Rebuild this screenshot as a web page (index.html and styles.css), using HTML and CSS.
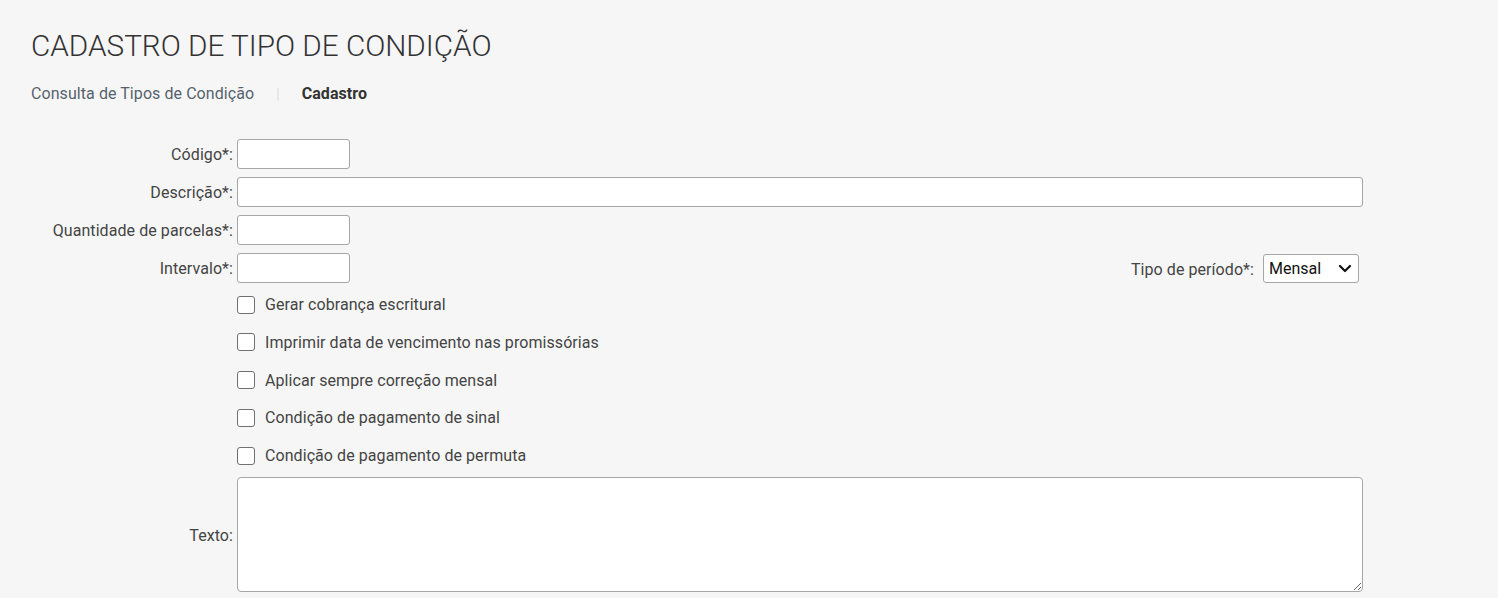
FILE: index.html
```html
<!DOCTYPE html>
<html lang="pt-BR">
<head>
<meta charset="utf-8">
<title>Cadastro de Tipo de Condição</title>
<link rel="stylesheet" href="styles.css">
</head>
<body>
<div class="page">
  <header class="page-header">
    <h1 class="title">CADASTRO DE TIPO DE CONDIÇÃO</h1>
    <nav class="crumbs">
      <a class="crumb-link" href="#">Consulta de Tipos de Condição</a>
      <span class="crumb-sep">|</span>
      <span class="crumb-current">Cadastro</span>
    </nav>
  </header>

  <form class="form">
    <label class="f-label">Código*:</label>
    <div class="f-field"><input class="inp inp-short" type="text"></div>

    <label class="f-label">Descrição*:</label>
    <div class="f-field"><input class="inp inp-full" type="text"></div>

    <label class="f-label">Quantidade de parcelas*:</label>
    <div class="f-field"><input class="inp inp-short" type="text"></div>

    <label class="f-label">Intervalo*:</label>
    <div class="f-field f-split">
      <input class="inp inp-short" type="text">
      <div class="period">
        <span class="period-label">Tipo de período*:</span>
        <div class="sel-wrap">
          <select class="sel"><option>Mensal</option></select>
          <svg class="sel-arrow" width="14" height="9" viewBox="0 0 14 9"><path d="M2 2 L7 7 L12 2" fill="none" stroke="#111" stroke-width="2.2" stroke-linecap="round" stroke-linejoin="round"/></svg>
        </div>
      </div>
    </div>

    <span class="f-label"></span>
    <div class="f-field checks">
      <label class="chk"><input type="checkbox" class="box"><span>Gerar cobrança escritural</span></label>
      <label class="chk"><input type="checkbox" class="box"><span>Imprimir data de vencimento nas promissórias</span></label>
      <label class="chk"><input type="checkbox" class="box"><span>Aplicar sempre correção mensal</span></label>
      <label class="chk"><input type="checkbox" class="box"><span>Condição de pagamento de sinal</span></label>
      <label class="chk"><input type="checkbox" class="box"><span>Condição de pagamento de permuta</span></label>
    </div>

    <label class="f-label">Texto:</label>
    <div class="f-field"><textarea class="txt"></textarea></div>
  </form>
</div>
</body>
</html>
```

FILE: styles.css
```css
* { box-sizing: border-box; }
html, body { margin: 0; padding: 0; }
body {
  background: #f6f6f6;
  font-family: Roboto, "Liberation Sans", Arial, sans-serif;
  color: #444;
  height: 598px;
  overflow: hidden;
  letter-spacing: 0.07px;
}
.page-header { padding: 29px 31px 0 31px; }
.title {
  margin: 0;
  font-weight: 300;
  font-size: 29.7px;
  line-height: 34px;
  color: #333;
  letter-spacing: 0;
}
.crumbs {
  display: flex;
  align-items: center;
  margin-top: 20px;
  font-size: 16px;
  line-height: 22px;
}
.crumb-link { color: #56636d; text-decoration: none; }
.crumb-sep { color: #ddd; margin: 0 22px 0 22px; font-size: 14px; }
.crumb-current { color: #333; font-weight: 700; }

.form {
  display: grid;
  grid-template-columns: 233px 1126px;
  column-gap: 4px;
  row-gap: 8px;
  margin-top: 34px;
  font-size: 16px;
}
.f-label {
  text-align: right;
  align-self: center;
  color: #444;
  line-height: 18px;
  padding-top: 2px;
}
.f-field { display: flex; align-items: center; }
.f-split { justify-content: space-between; }
.inp {
  height: 30px;
  border: 1px solid #a6a6a6;
  border-radius: 3px;
  background: #fff;
  font: inherit;
  padding: 0 6px;
}
.inp-short { width: 113px; }
.inp-full { width: 1126px; }
.period { display: flex; align-items: center; gap: 9px; margin-right: 4px; }
.period-label { color: #444; padding-top: 2px; }
.sel-wrap { position: relative; display: flex; }
.sel {
  appearance: none;
  -webkit-appearance: none;
  width: 96px;
  height: 29px;
  border: 1px solid #a6a6a6;
  border-radius: 3px;
  background: #fff;
  font: inherit;
  color: #111;
  padding: 0 0 0 5px;
}
.sel-arrow {
  position: absolute;
  right: 7px;
  top: 10px;
  pointer-events: none;
}
.checks {
  flex-direction: column;
  align-items: flex-start;
  gap: 10.75px;
}
.chk {
  display: flex;
  align-items: center;
  height: 27px;
  color: #444;
  cursor: pointer;
}
.box {
  appearance: none;
  -webkit-appearance: none;
  width: 18px;
  height: 18px;
  margin: 0 10px 0 0;
  border: 1.5px solid #707070;
  border-radius: 3px;
  background: #fff;
}
.txt {
  width: 1126px;
  height: 115px;
  border: 1px solid #a6a6a6;
  border-radius: 4px;
  background: #fff;
  font: inherit;
  margin: 0;
  display: block;
}
```
